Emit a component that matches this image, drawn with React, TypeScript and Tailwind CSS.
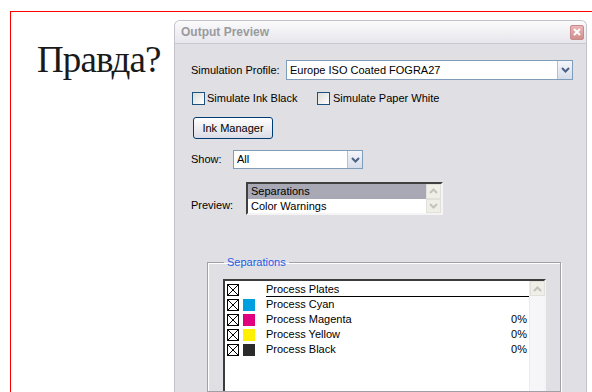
import React from "react";

const ui = { fontFamily: '"Liberation Sans", Arial, sans-serif' };

const Chevron = ({ color = "#4d6185" }: { color?: string }) => (
  <svg width="9" height="6" viewBox="0 0 9 6">
    <path d="M1 1 L4.5 4.5 L8 1" fill="none" stroke={color} strokeWidth="2" />
  </svg>
);

const Select = ({ value, className }: { value: string; className: string }) => (
  <div className={`flex items-center bg-white border border-[#7f9db9] ${className}`}>
    <span className="flex-1 pl-[3px] text-[11px] text-black leading-none">{value}</span>
    <div className="w-[15px] h-full border-l border-[#b4bfd6] bg-gradient-to-b from-[#f4f6fb] to-[#d7ddea] flex items-center justify-center">
      <Chevron />
    </div>
  </div>
);

const Checkbox = () => (
  <div className="w-[13px] h-[13px] border border-[#1c5180] bg-gradient-to-br from-[#dcdcd7] to-[#ffffff]" />
);

const XBox = () => (
  <svg width="12" height="12" viewBox="0 0 12 12" className="shrink-0">
    <rect x="0.5" y="0.5" width="11" height="11" fill="white" stroke="black" />
    <path d="M1 1 L11 11 M11 1 L1 11" stroke="black" strokeWidth="1" />
  </svg>
);

const ScrollBtn = ({ up }: { up: boolean }) => (
  <div className="w-[15px] h-[15px] bg-[#efeee7] border border-[#e1e0da] flex items-center justify-center">
    <svg width="9" height="6" viewBox="0 0 9 6">
      <path d={up ? "M1 5 L4.5 1.5 L8 5" : "M1 1 L4.5 4.5 L8 1"} fill="none" stroke="#c4c3bd" strokeWidth="2" />
    </svg>
  </div>
);

const seps = [
  { name: "Process Cyan", color: "#00a0e0", pct: "" },
  { name: "Process Magenta", color: "#e0007f", pct: "0%" },
  { name: "Process Yellow", color: "#fff000", pct: "0%" },
  { name: "Process Black", color: "#2b2b2b", pct: "0%" },
];

export default function App() {
  return (
    <div className="w-[592px] h-[392px] bg-white overflow-hidden pl-[10px] pt-[11px]" style={ui}>
      <div className="h-full flex border-l border-t border-[#ff0000]">
        <div className="w-[163px] shrink-0 pl-[26px] pt-[29px]">
          <div
            className="text-[37px] leading-[37px] text-[#1a1a1a] tracking-[-0.9px]"
            style={{ fontFamily: '"Liberation Serif", "Times New Roman", serif' }}
          >
            Правда?
          </div>
        </div>

        <div className="mt-[8px] w-[413px] shrink-0 flex flex-col rounded-t-[6px] border border-b-0 border-[#c3c3cb] bg-[#e0dfe3] overflow-hidden">
          {/* title bar */}
          <div className="h-[23px] shrink-0 flex items-center justify-between pl-[6px] pr-[2px] bg-gradient-to-b from-[#fbfbfc] to-[#e6e6ec] border-b border-[#c9c9d2]">
            <span className="text-[12px] font-bold text-[#9a9a9e]">Output Preview</span>
            <div className="w-[14px] h-[15px] rounded-[2px] border border-[#c88a8a] bg-gradient-to-b from-[#ebb6b6] to-[#d08f8f] flex items-center justify-center">
              <svg width="8" height="8" viewBox="0 0 8 8">
                <path d="M1 1 L7 7 M7 1 L1 7" stroke="white" strokeWidth="2" />
              </svg>
            </div>
          </div>

          {/* content */}
          <div className="flex-1 flex flex-col pl-[16px] pt-[16px] text-[11px] leading-[13px] text-black">
            <div className="flex items-center">
              <span className="w-[95px]">Simulation Profile:</span>
              <Select value="Europe ISO Coated FOGRA27" className="w-[287px] h-[20px]" />
            </div>

            <div className="flex items-center mt-[12px] pl-[1px]">
              <Checkbox />
              <span className="ml-[2px] w-[110px]">Simulate Ink Black</span>
              <Checkbox />
              <span className="ml-[3px]">Simulate Paper White</span>
            </div>

            <div className="mt-[12px] ml-[2px]">
              <div className="w-[80px] h-[22px] rounded-[3px] border border-[#003c74] bg-gradient-to-b from-[#ffffff] to-[#dcdce6] flex items-center justify-center">
                Ink Manager
              </div>
            </div>

            <div className="flex items-center mt-[11px]">
              <span className="w-[42px]">Show:</span>
              <Select value="All" className="w-[130px] h-[19px]" />
            </div>

            <div className="flex items-end mt-[13px]">
              <span className="w-[55px] pb-[3px]">Preview:</span>
              <div className="w-[197px] h-[33px] flex border-2 border-t-[#404040] border-l-[#404040] border-r-[#f4f4f4] border-b-[#f4f4f4] bg-white">
                <div className="flex-1 flex flex-col">
                  <div className="h-[15px] bg-[#a9a9b6] pl-[3px] flex items-center">Separations</div>
                  <div className="h-[14px] pl-[3px] flex items-center">Color Warnings</div>
                </div>
                <div className="flex flex-col bg-[#f6f6f8]">
                  <ScrollBtn up />
                  <ScrollBtn up={false} />
                </div>
              </div>
            </div>

            <fieldset className="mt-[41px] ml-[16px] w-[354px] flex-1 border border-[#a0a0a6] shadow-[inset_1px_1px_0_#ffffff,1px_1px_0_#ffffff] pl-[15px] pt-[10px]">
              <legend className="ml-[1px] px-[3px] text-[#1d5ce6] text-[11px] leading-[13px]">Separations</legend>
              <div className="w-[323px] h-full flex border-2 border-t-[#3c3c3c] border-l-[#3c3c3c] border-r-[#f4f4f4] border-b-0 bg-white">
                <div className="flex-1 flex flex-col pt-[1px]">
                  <div className="h-[15px] flex items-center pl-[2px]">
                    <XBox />
                    <span className="ml-[27px] flex-1 h-[14px] border-b border-black leading-[12px]">
                      Process Plates
                    </span>
                  </div>
                  {seps.map((s) => (
                    <div key={s.name} className="h-[15px] flex items-center pl-[2px]">
                      <XBox />
                      <div className="w-[12px] h-[12px] ml-[4px]" style={{ background: s.color }} />
                      <span className="ml-[11px] flex-1">{s.name}</span>
                      <span className="pr-[2px]">{s.pct}</span>
                    </div>
                  ))}
                </div>
                <div className="w-[15px] bg-[#f6f6f8] border-l border-[#ececf0]">
                  <ScrollBtn up />
                </div>
              </div>
            </fieldset>
          </div>
        </div>
      </div>
    </div>
  );
}
